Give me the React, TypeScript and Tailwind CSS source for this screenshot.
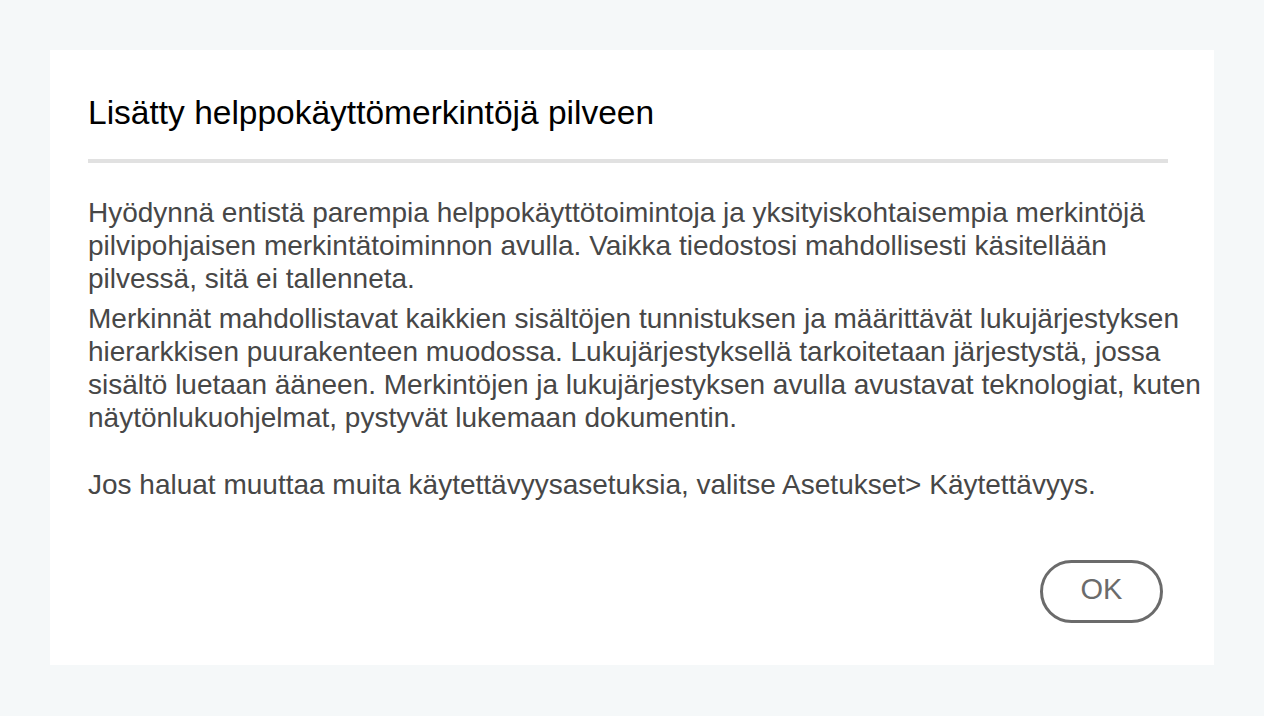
const BODY_FONT = { fontFamily: '"Liberation Sans", Arial, sans-serif' };

export default function App() {
  return (
    <div className="min-h-[716px] w-full bg-[#f5f8f9] p-[50px]" style={BODY_FONT}>
      <div className="flex h-[615px] w-[1164px] flex-col bg-white pl-[38px] pr-[6px]">
        <h1 className="pt-[44px] text-[33.5px] leading-[38px] text-black">
          Lisätty helppokäyttömerkintöjä pilveen
        </h1>
        <div className="mt-[27px] mr-[40px] h-[4px] bg-[#e1e1e1]" />
        <div className="mt-[33px] text-[28px] leading-[33px] text-[#474747]">
          <p>
            Hyödynnä entistä parempia helppokäyttötoimintoja ja yksityiskohtaisempia merkintöjä
            pilvipohjaisen merkintätoiminnon avulla. Vaikka tiedostosi mahdollisesti käsitellään
            pilvessä, sitä ei tallenneta.
          </p>
          <p className="mt-[7px]">
            Merkinnät mahdollistavat kaikkien sisältöjen tunnistuksen ja määrittävät lukujärjestyksen
            hierarkkisen puurakenteen muodossa. Lukujärjestyksellä tarkoitetaan järjestystä, jossa
            sisältö luetaan ääneen. Merkintöjen ja lukujärjestyksen avulla avustavat teknologiat, kuten
            näytönlukuohjelmat, pystyvät lukemaan dokumentin.
          </p>
          <p className="mt-[34px]">
            Jos haluat muuttaa muita käytettävyysasetuksia, valitse Asetukset&gt; Käytettävyys.
          </p>
        </div>
        <div className="mt-auto mb-[42px] flex justify-end pr-[45px]">
          <button className="h-[63px] w-[123px] rounded-full border-[3px] border-[#6b6b6b] pb-[5px] text-[29px] leading-none text-[#6b6b6b]">
            OK
          </button>
        </div>
      </div>
    </div>
  );
}
